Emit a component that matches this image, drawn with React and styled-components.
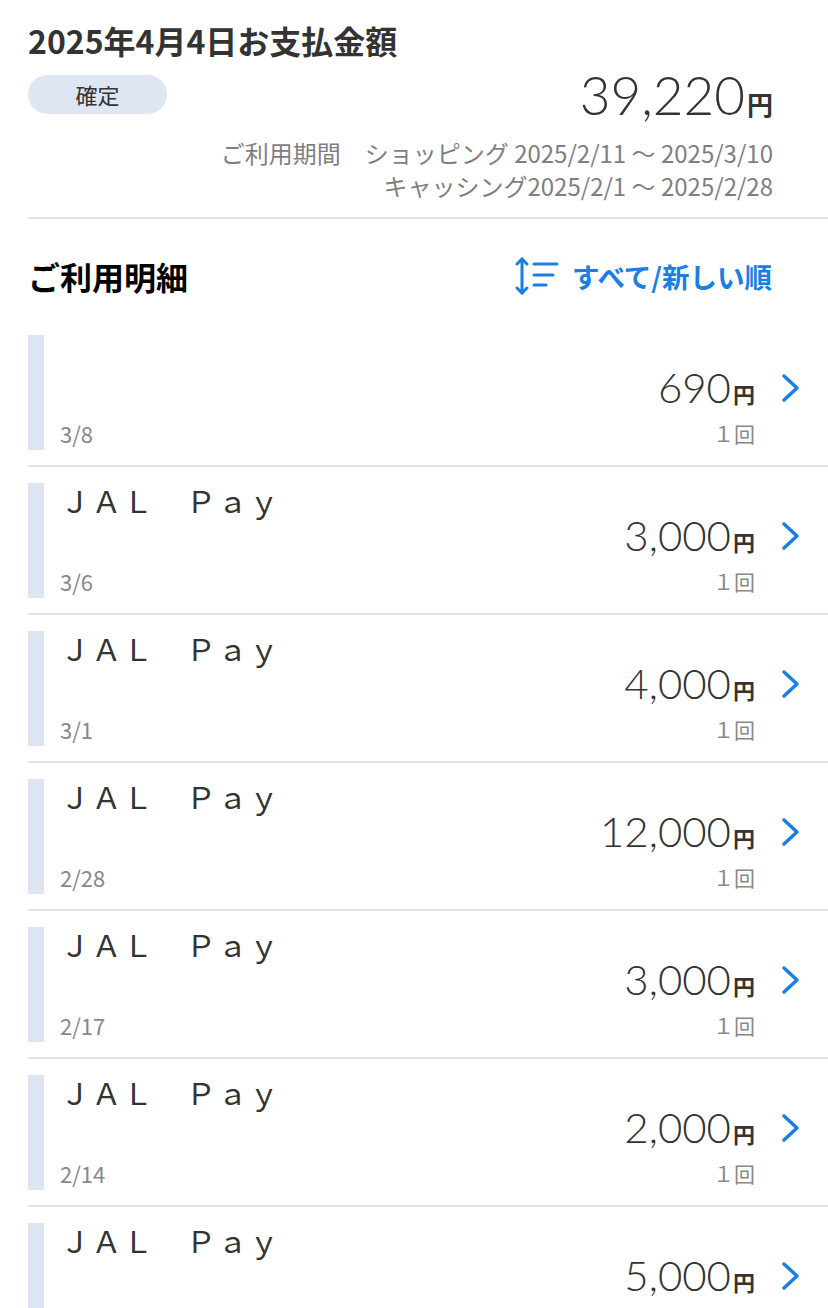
import React from "react";
import styled, { createGlobalStyle } from "styled-components";

const GlobalStyle = createGlobalStyle`
  html, body { margin: 0; padding: 0; background: #ffffff; }
  body {
    font-family: "Noto Sans CJK JP", "Noto Sans", sans-serif;
    color: #333333;
    -webkit-font-smoothing: antialiased;
  }
  * { box-sizing: border-box; }
`;

const Page = styled.div`
  width: 828px;
  height: 1308px;
  overflow: hidden;
  padding-left: 28px;
  padding-top: 20px;
  position: relative;
`;

const Summary = styled.section`
  padding-right: 55px;
  padding-bottom: 15px;
  border-bottom: 2px solid #e3e3e3;
`;

const Title = styled.h1`
  margin: 0;
  font-size: 32px;
  line-height: 40px;
  font-weight: 700;
  color: #333333;
`;

const TotalRow = styled.div`
  margin-top: 4px;
  height: 60px;
  display: flex;
  align-items: center;
  justify-content: space-between;
`;

const StatusPill = styled.span`
  width: 139px;
  height: 39px;
  border-radius: 20px;
  background: #dde6f2;
  display: flex;
  align-items: center;
  justify-content: center;
  font-size: 22px;
  color: #333333;
`;

const Amount = styled.span`
  display: inline-flex;
  align-items: baseline;
  color: #333333;
`;

const Digits = styled.span`
  font-family: Lato, "Noto Sans", sans-serif;
  font-weight: 300;
  font-size: ${(p) => p.$size}px;
  line-height: 1;
`;

const Yen = styled.span`
  font-family: "Noto Sans CJK JP", sans-serif;
  font-weight: 700;
  font-size: ${(p) => p.$size}px;
  line-height: 1;
  margin-left: 2px;
`;

const Period = styled.div`
  margin-top: 12px;
  text-align: right;
  font-size: 24px;
  line-height: 33px;
  color: #7f7f7f;
`;

const SectionHead = styled.div`
  margin-top: 32px;
  margin-bottom: 34px;
  height: 50px;
  padding-right: 56px;
  display: flex;
  align-items: center;
  justify-content: space-between;
`;

const SectionTitle = styled.h2`
  margin: 0;
  font-size: 32px;
  font-weight: 700;
  color: #000000;
`;

const SortButton = styled.button`
  border: none;
  background: none;
  padding: 0;
  display: flex;
  align-items: center;
  gap: 13px;
  font-family: "Noto Sans CJK JP", sans-serif;
  font-size: 27.5px;
  font-weight: 700;
  color: #1a7fe2;
`;

const List = styled.ul`
  list-style: none;
  margin: 0;
  padding: 0;
`;

const Item = styled.li`
  padding: 0 28px 15px 0;
  margin-bottom: 16px;
  border-bottom: 2px solid #e3e3e3;
  display: flex;
`;

const Bar = styled.div`
  width: 16px;
  height: 115px;
  background: #dce5f1;
  flex-shrink: 0;
`;

const Body = styled.div`
  flex: 1;
  height: 115px;
  padding-left: 16px;
  display: grid;
  grid-template-columns: 1fr auto 45px;
  grid-template-rows: 33px 38px 1fr;
`;

const Name = styled.div`
  grid-column: 1 / 3;
  grid-row: 1;
  font-size: 30px;
  line-height: 34px;
  color: #333333;
  letter-spacing: 1.5px;
`;

const ItemAmount = styled.div`
  grid-column: 2;
  grid-row: 2;
  justify-self: end;
  align-self: center;
`;

const Chevron = styled.div`
  grid-column: 3;
  grid-row: 2;
  align-self: center;
  justify-self: end;
  display: flex;
  padding-top: 2px;
`;

const DateText = styled.div`
  grid-column: 1;
  grid-row: 3;
  align-self: end;
  font-size: 22px;
  line-height: 30px;
  margin-bottom: 2px;
  color: #888888;
`;

const Count = styled.div`
  grid-column: 2;
  grid-row: 3;
  align-self: end;
  justify-self: end;
  font-size: 21px;
  line-height: 30px;
  margin-bottom: 2px;
  color: #888888;
`;

const SortIcon = () => (
  <svg width="44" height="40" viewBox="0 0 44 40" fill="none" stroke="#1a7fe2" strokeWidth="3" strokeLinecap="round" strokeLinejoin="round">
    <line x1="7" y1="3" x2="7" y2="37" />
    <polyline points="2,8 7,3 12,8" />
    <polyline points="2,32 7,37 12,32" />
    <line x1="19" y1="8" x2="42" y2="8" />
    <line x1="19" y1="19" x2="38" y2="19" />
    <line x1="19" y1="29" x2="31" y2="29" />
  </svg>
);

const ChevronIcon = () => (
  <svg width="20" height="30" viewBox="0 0 20 30" fill="none" stroke="#1a7fe2" strokeWidth="3.5" strokeLinecap="round" strokeLinejoin="round">
    <polyline points="4,3 17,15 4,27" />
  </svg>
);

const items = [
  { name: "", amount: "690", date: "3/8" },
  { name: "ＪＡＬ　Ｐａｙ", amount: "3,000", date: "3/6" },
  { name: "ＪＡＬ　Ｐａｙ", amount: "4,000", date: "3/1" },
  { name: "ＪＡＬ　Ｐａｙ", amount: "12,000", date: "2/28" },
  { name: "ＪＡＬ　Ｐａｙ", amount: "3,000", date: "2/17" },
  { name: "ＪＡＬ　Ｐａｙ", amount: "2,000", date: "2/14" },
  { name: "ＪＡＬ　Ｐａｙ", amount: "5,000", date: "2/10" },
];

export default function App() {
  return (
    <>
      <GlobalStyle />
      <Page>
        <Summary>
          <Title>2025年4月4日お支払金額</Title>
          <TotalRow>
            <StatusPill>確定</StatusPill>
            <Amount>
              <Digits $size={53}>39,220</Digits>
              <Yen $size={26}>円</Yen>
            </Amount>
          </TotalRow>
          <Period>
            <div>ご利用期間　ショッピング 2025/2/11 ～ 2025/3/10</div>
            <div>キャッシング2025/2/1 ～ 2025/2/28</div>
          </Period>
        </Summary>
        <SectionHead>
          <SectionTitle>ご利用明細</SectionTitle>
          <SortButton>
            <SortIcon />
            すべて/新しい順
          </SortButton>
        </SectionHead>
        <List>
          {items.map((it, i) => (
            <Item key={i}>
              <Bar />
              <Body>
                <Name>{it.name}</Name>
                <ItemAmount>
                  <Amount>
                    <Digits $size={42}>{it.amount}</Digits>
                    <Yen $size={22}>円</Yen>
                  </Amount>
                </ItemAmount>
                <Chevron>
                  <ChevronIcon />
                </Chevron>
                <DateText>{it.date}</DateText>
                <Count>１回</Count>
              </Body>
            </Item>
          ))}
        </List>
      </Page>
    </>
  );
}
